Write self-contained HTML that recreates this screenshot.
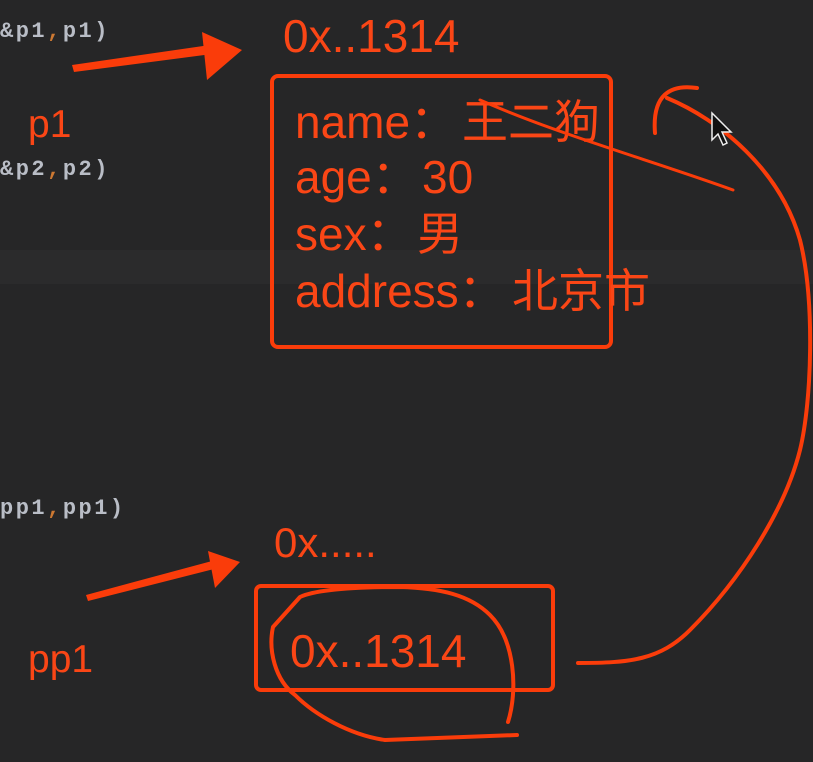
<!DOCTYPE html>
<html><head><meta charset="utf-8"><style>
html,body{margin:0;padding:0;background:#262627;width:813px;height:762px;overflow:hidden}
svg{display:block}
.c{font-family:"Liberation Mono",monospace;font-size:22px;fill:#b9bdc6;letter-spacing:2.5px;font-weight:bold}
.o{fill:#cc7832}
.t{font-family:"Liberation Sans","Noto Sans CJK SC",sans-serif;fill:#fa4616}
</style></head><body>
<svg width="813" height="762" viewBox="0 0 813 762" xmlns="http://www.w3.org/2000/svg">
<rect width="813" height="762" fill="#262627"/>
<rect x="0" y="250" width="813" height="34" fill="#2b2b2c"/>
<text class="c" x="0" y="37">&amp;p1<tspan class="o">,</tspan>p1)</text>
<text class="c" x="0" y="175">&amp;p2<tspan class="o">,</tspan>p2)</text>
<text class="c" x="0" y="514">pp1<tspan class="o">,</tspan>pp1)</text>
<g fill="#fa3c0a">
<polygon points="72,65 210,45 212,54 74,72"/>
<polygon points="202,32 242,50 207,80"/>
<polygon points="86,595 212,561 214,569 88,601"/>
<polygon points="208,551 240,562 215,588"/>
</g>
<text class="t" x="28" y="137" font-size="39">p1</text>
<text class="t" x="28" y="672" font-size="39">pp1</text>
<text class="t" x="283" y="52" font-size="46">0x..1314</text>
<text class="t" x="274" y="557" font-size="42">0x.....</text>
<g fill="none" stroke="#fa3c0a" stroke-width="4" stroke-linecap="round" stroke-linejoin="round">
<rect x="272" y="76" width="339" height="271" rx="6"/>
<rect x="256" y="586" width="297" height="104" rx="5"/>
</g>
<g class="t" font-size="46">
<text x="295" y="138">name：</text><text x="462" y="138">王二狗</text>
<text x="295" y="193">age：</text><text x="422" y="193">30</text>
<text x="295" y="250">sex：</text><text x="417" y="250">男</text>
<text x="295" y="307">address：</text><text x="512" y="307">北京市</text>
</g>
<text class="t" x="290" y="667" font-size="46">0x..1314</text>
<g fill="none" stroke="#fa3c0a" stroke-width="4" stroke-linecap="round" stroke-linejoin="round">
<path d="M480,100 C560,135 650,160 733,190" stroke-width="3"/>
<path d="M697,88 C670,84 652,95 655,133"/>
<path d="M667,98 C720,120 780,170 800,240 C815,300 812,400 800,450 C785,510 740,580 690,630 C660,660 630,663 578,663"/>
<path d="M508,722 C518,690 515,640 490,615 C470,595 440,588 400,587 C350,587 315,590 300,597 L273,627 C268,650 275,680 295,695 C315,715 350,735 385,740 L517,735"/>
</g>
<path d="M712,113 L712,140 L718,134 L723,145 L727,143 L722,132 L731,132 Z" fill="#111" stroke="#eee" stroke-width="1.5"/>
</svg>
</body></html>
